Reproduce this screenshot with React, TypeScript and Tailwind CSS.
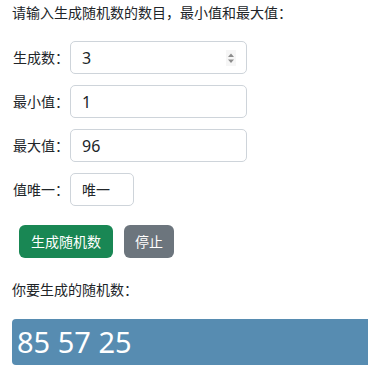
import React from 'react';

const font = "font-['Noto_Sans','Noto_Sans_CJK_SC',sans-serif]";

const Field: React.FC<{ label: string; value: string; spinner?: boolean; narrow?: boolean }> = ({
  label,
  value,
  spinner,
  narrow,
}) => (
  <div className="flex h-[33px] items-center">
    <span className="w-[58px] pl-px">{label}</span>
    <div
      className={`flex h-[33px] items-center justify-between rounded-[5px] border border-[#ced4da] bg-white pl-[11px] pr-[10px] ${
        narrow ? 'w-[64px] text-[14px]' : 'w-[177px] text-[16px]'
      }`}
    >
      <span>{value}</span>
      {spinner && (
        <svg width="10" height="16" viewBox="0 0 10 16" className="bg-[#f6f6f6]">
          <path d="M2 7 L5 3.5 L8 7 Z" fill="#8d8d8d" />
          <path d="M2 9.5 L5 13 L8 9.5 Z" fill="#8d8d8d" />
        </svg>
      )}
    </div>
  </div>
);

export default function App() {
  return (
    <div className={`${font} pl-3 pt-[2px] text-[14px] text-[#212529]`}>
      <p className="leading-[21px]">请输入生成随机数的数目，最小值和最大值：</p>

      <div className="mt-[18px] flex flex-col gap-[11px]">
        <Field label="生成数：" value="3" spinner />
        <Field label="最小值：" value="1" />
        <Field label="最大值：" value="96" />
        <Field label="值唯一：" value="唯一" narrow />
      </div>

      <div className="mt-[19px] flex gap-[11px] pl-[7px]">
        <button className="h-[33px] rounded-[6px] bg-[#198754] px-3 text-white">生成随机数</button>
        <button className="h-[33px] rounded-[6px] bg-[#6c757d] px-[11px] text-white">停止</button>
      </div>

      <p className="mt-[21px] leading-[21px]">你要生成的随机数：</p>

      <div className="mt-[19px] flex h-[46px] items-center rounded-l-[4px] bg-[#578cb1] pl-[5px] text-[29px] text-white">
        85 57 25
      </div>
    </div>
  );
}
